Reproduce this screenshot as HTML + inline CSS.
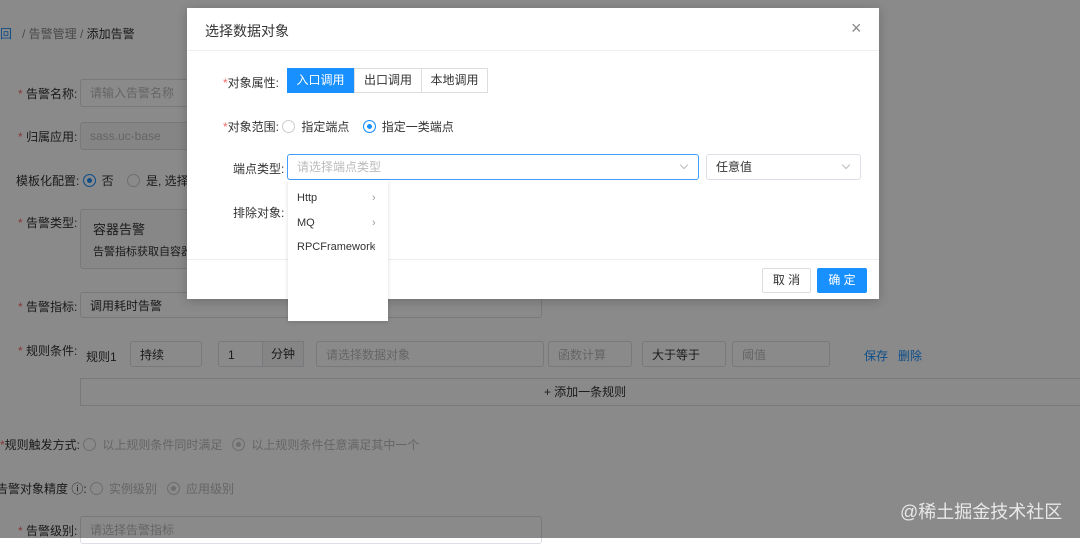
<!DOCTYPE html>
<html><head><meta charset="utf-8"><style>
*{box-sizing:border-box;margin:0;padding:0}
body{width:1080px;height:538px;overflow:hidden;position:relative;background:#fff;font-family:"Liberation Sans","Noto Sans CJK SC",sans-serif;font-size:12px;color:#333}
.a{position:absolute;white-space:nowrap}
.in{position:absolute;border:1px solid #dcdfe6;border-radius:3px;background:#fff;color:#bbb;padding-left:9px;line-height:26px}
.st{color:#f56c6c}
.rad{display:inline-block;width:13px;height:13px;border:1px solid #ccc;border-radius:50%;vertical-align:-2px;margin-right:6px;background:#fff}
.rad.on{border-color:#1890ff;box-shadow:inset 0 0 0 3px #fff;background:#1890ff}
.ov{position:absolute;left:0;top:0;width:1080px;height:538px;background:rgba(0,0,0,0.46)}
.chev{position:absolute;width:6px;height:6px;border-right:1px solid #bbb;border-bottom:1px solid #bbb;transform:rotate(45deg)}
</style></head><body>
<div class="a" style="left:0;top:25px;color:#1890ff">回</div>
<div class="a" style="left:22px;top:25px;color:#888">/ 告警管理 / <span style="color:#333">添加告警</span></div>
<div class="a" style="left:18px;top:85px"><span class="st">*</span> 告警名称:</div>
<div class="in" style="left:80px;top:79px;width:470px;height:28px">请输入告警名称</div>
<div class="a" style="left:18px;top:128px"><span class="st">*</span> 归属应用:</div>
<div class="in" style="left:80px;top:122px;width:470px;height:28px;background:#f5f5f5">sass.uc-base</div>
<div class="a" style="left:16px;top:172px">模板化配置: <span class="rad on"></span>否 &nbsp;&nbsp; <span class="rad"></span>是, 选择一</div>
<div class="a" style="left:18px;top:214px"><span class="st">*</span> 告警类型:</div>
<div class="in" style="left:80px;top:209px;width:470px;height:60px;color:#333;padding:12px 12px;line-height:16px;background:#fafafa"><div style="font-size:13px">容器告警</div><div style="font-size:11px;margin-top:6px">告警指标获取自容器k8s</div></div>
<div class="a" style="left:18px;top:298px"><span class="st">*</span> 告警指标:</div>
<div class="in" style="left:80px;top:292px;width:462px;height:26px;color:#333">调用耗时告警</div>
<div class="a" style="left:18px;top:342px"><span class="st">*</span> 规则条件:</div>
<div class="a" style="left:86px;top:348px">规则1</div>
<div class="in" style="left:130px;top:341px;width:72px;height:26px;color:#333">持续</div>
<div class="in" style="left:218px;top:341px;width:86px;height:26px;color:#333">1</div>
<div class="a" style="left:262px;top:341px;width:42px;height:26px;background:#f5f5f5;border:1px solid #dcdfe6;line-height:24px;text-align:center">分钟</div>
<div class="in" style="left:316px;top:341px;width:228px;height:26px">请选择数据对象</div>
<div class="in" style="left:548px;top:341px;width:84px;height:26px">函数计算</div>
<div class="in" style="left:642px;top:341px;width:84px;height:26px;color:#333">大于等于</div>
<div class="in" style="left:732px;top:341px;width:98px;height:26px">阈值</div>
<div class="a" style="left:864px;top:347px;color:#1890ff">保存 &nbsp; 删除</div>
<div class="a" style="left:80px;top:378px;width:1010px;height:28px;border:1px solid #dcdfe6;text-align:center;line-height:26px">+ 添加一条规则</div>
<div class="a" style="left:0;top:436px"><span class="st">*</span>规则触发方式: <span style="color:#bbb"><span class="rad"></span>以上规则条件同时满足 &nbsp; <span class="rad on" style="background:#ccc;border-color:#ccc"></span>以上规则条件任意满足其中一个</span></div>
<div class="a" style="left:-4px;top:480px">告警对象精度 ⓘ: <span style="color:#bbb"><span class="rad"></span>实例级别 &nbsp; <span class="rad on" style="background:#ccc;border-color:#ccc"></span>应用级别</span></div>
<div class="a" style="left:18px;top:522px"><span class="st">*</span> 告警级别:</div>
<div class="in" style="left:80px;top:516px;width:462px;height:28px">请选择告警指标</div>
<div class="ov"></div>
<div class="a" style="left:900px;top:498px;font-size:18px;color:#e8e8e8">@稀土掘金技术社区</div>

<div class="a" style="left:187px;top:8px;width:692px;height:291px;background:#fff;box-shadow:0 2px 10px rgba(0,0,0,.2)">
 <div class="a" style="left:18px;top:13px;font-size:14px;color:#333">选择数据对象</div>
 <div class="a" style="left:664px;top:10px;font-size:18px;color:#888">×</div>
 <div class="a" style="left:0;top:42px;width:692px;height:1px;background:#eee"></div>
 <div class="a" style="left:36px;top:66px"><span class="st">*</span>对象属性:</div>
 <div class="a" style="left:100px;top:60px;width:67px;height:25px;background:#1890ff;color:#fff;text-align:center;line-height:25px">入口调用</div>
 <div class="a" style="left:167px;top:60px;width:68px;height:25px;border:1px solid #ddd;text-align:center;line-height:23px">出口调用</div>
 <div class="a" style="left:234px;top:60px;width:67px;height:25px;border:1px solid #ddd;text-align:center;line-height:23px">本地调用</div>
 <div class="a" style="left:36px;top:110px"><span class="st">*</span>对象范围: <span class="rad"></span>指定端点 &nbsp;&nbsp; <span class="rad on"></span>指定一类端点</div>
 <div class="a" style="left:46px;top:152px">端点类型:</div>
 <div class="in" style="left:100px;top:146px;width:412px;height:26px;border-color:#409eff;line-height:24px">请选择端点类型</div>
 <div class="chev" style="left:494px;top:154px"></div>
 <div class="in" style="left:519px;top:146px;width:155px;height:26px;color:#333;line-height:24px">任意值</div>
 <div class="chev" style="left:656px;top:154px"></div>
 <div class="a" style="left:46px;top:196px">排除对象:</div>
 <div class="a" style="left:0;top:251px;width:692px;height:1px;background:#eee"></div>
 <div class="a" style="left:575px;top:260px;width:49px;height:25px;border:1px solid #ddd;border-radius:2px;text-align:center;line-height:23px">取 消</div>
 <div class="a" style="left:630px;top:260px;width:50px;height:25px;background:#1890ff;color:#fff;border-radius:2px;text-align:center;line-height:25px">确 定</div>
</div>
<div class="a" style="left:288px;top:180px;width:100px;height:141px;background:#fff;box-shadow:0 1px 4px rgba(0,0,0,.15);font-size:11px">
 <div class="a" style="left:9px;top:12px">Http</div><div class="a" style="left:84px;top:12px;color:#999">›</div>
 <div class="a" style="left:9px;top:37px">MQ</div><div class="a" style="left:84px;top:37px;color:#999">›</div>
 <div class="a" style="left:9px;top:61px">RPCFramework</div><div class="a" style="left:84px;top:61px;color:#999">›</div>
</div>
</body></html>
